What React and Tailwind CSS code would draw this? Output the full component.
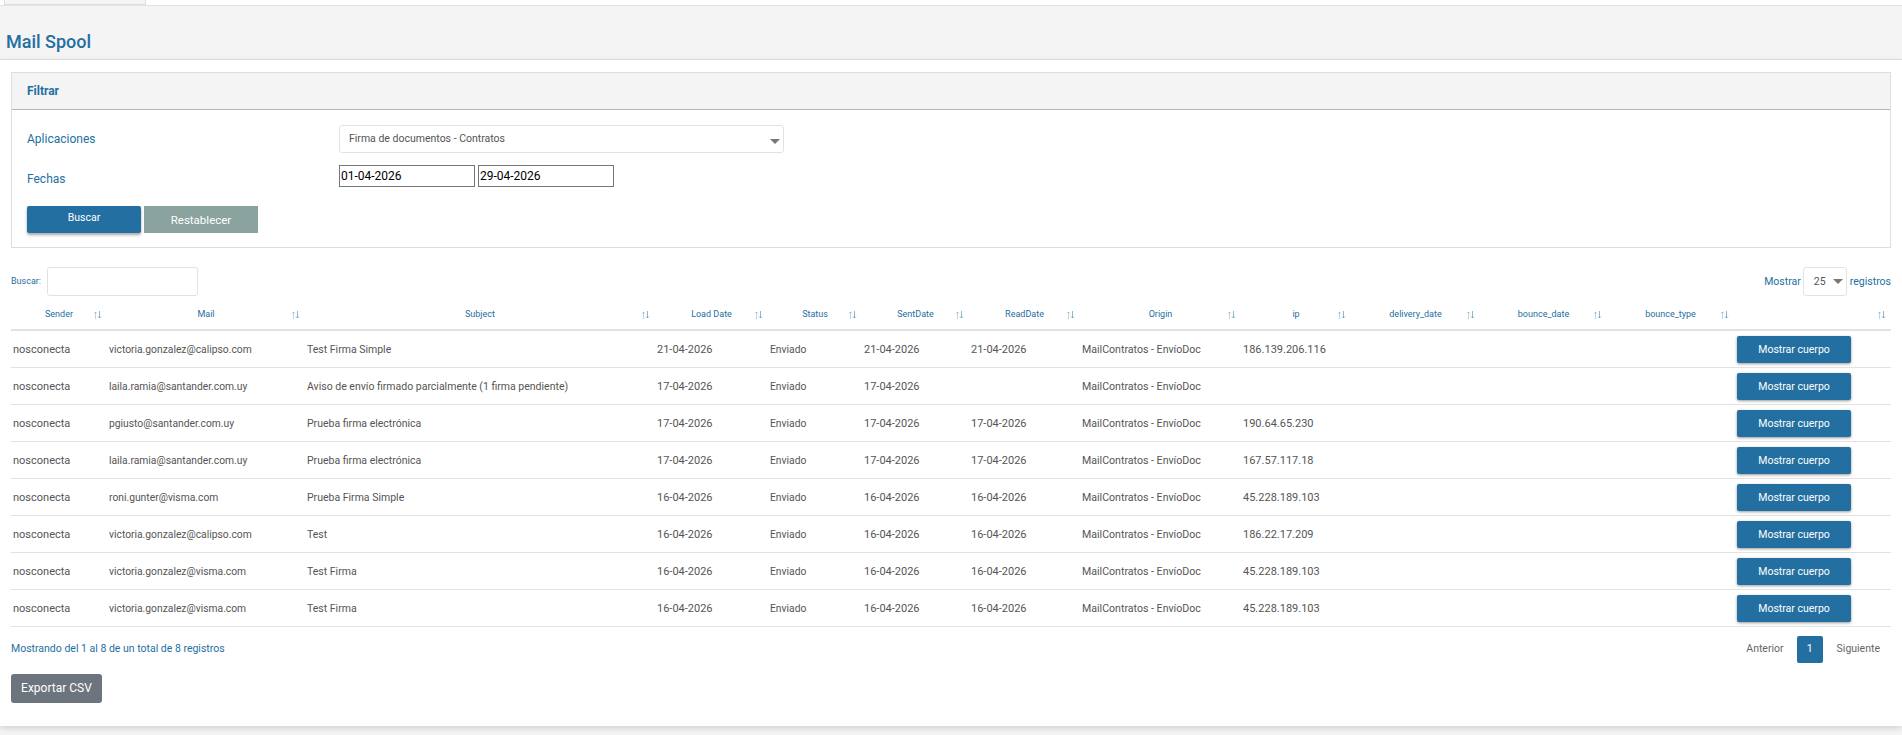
const blue = "text-[#236fa1]";

const columns = [
  { title: "Sender", width: "w-[96px]" },
  { title: "Mail", width: "w-[198px]" },
  { title: "Subject", width: "w-[350px]" },
  { title: "Load Date", width: "w-[113px]" },
  { title: "Status", width: "w-[94px]" },
  { title: "SentDate", width: "w-[107px]" },
  { title: "ReadDate", width: "w-[111px]" },
  { title: "Origin", width: "w-[161px]" },
  { title: "ip", width: "w-[110px]" },
  { title: "delivery_date", width: "w-[129px]" },
  { title: "bounce_date", width: "w-[127px]" },
  { title: "bounce_type", width: "w-[127px]" },
  { title: "", width: "w-[157px]" },
];

const rows = [
  ["victoria.gonzalez@calipso.com", "Test Firma Simple", "21-04-2026", "21-04-2026", "21-04-2026", "186.139.206.116"],
  ["laila.ramia@santander.com.uy", "Aviso de envío firmado parcialmente (1 firma pendiente)", "17-04-2026", "17-04-2026", "", ""],
  ["pgiusto@santander.com.uy", "Prueba firma electrónica", "17-04-2026", "17-04-2026", "17-04-2026", "190.64.65.230"],
  ["laila.ramia@santander.com.uy", "Prueba firma electrónica", "17-04-2026", "17-04-2026", "17-04-2026", "167.57.117.18"],
  ["roni.gunter@visma.com", "Prueba Firma Simple", "16-04-2026", "16-04-2026", "16-04-2026", "45.228.189.103"],
  ["victoria.gonzalez@calipso.com", "Test", "16-04-2026", "16-04-2026", "16-04-2026", "186.22.17.209"],
  ["victoria.gonzalez@visma.com", "Test Firma", "16-04-2026", "16-04-2026", "16-04-2026", "45.228.189.103"],
  ["victoria.gonzalez@visma.com", "Test Firma", "16-04-2026", "16-04-2026", "16-04-2026", "45.228.189.103"],
];

const SortIcon = () => (
  <svg width="9" height="8" viewBox="0 0 9 8" fill="none" stroke="#236fa1" strokeWidth="1" className="absolute right-[5px] top-1/2 -translate-y-1/2">
    <path d="M2.5 8V1M1 2.5L2.5 1L4 2.5" opacity="0.3" />
    <path d="M6.5 0V7M5 5.5L6.5 7L8 5.5" opacity="0.5" />
  </svg>
);

const Caret = ({ className }) => (
  <svg width="10" height="5" viewBox="0 0 10 5" className={`shrink-0 ${className || ""}`}>
    <path d="M0 0H10L5 5Z" fill="#777777" />
  </svg>
);

const App = () => {
  return (
    <div className="w-[1902px] h-[735px] overflow-hidden bg-[#f4f4f4] font-['Roboto',sans-serif]">
      <div className="h-[6px] bg-white border-b border-[#e2e2e2]">
        <div className="ml-[4px] w-[142px] h-[5px] bg-[#f4f4f4] border border-t-0 border-[#dddddd]"></div>
      </div>

      <div className="h-[54px] border-b border-[#e2e2e2] flex items-end pb-[5px] pl-[6px]">
        <h1 className={`text-[18px] leading-[24px] font-medium ${blue}`}>Mail Spool</h1>
      </div>

      <div className="bg-white h-[666px] px-[11px] pt-[12px] shadow-[0_2px_6px_rgba(0,0,0,0.15)]">
        <div className="h-[176px] border border-[#dddddd]">
          <div className={`h-[37px] bg-[#f4f4f4] border-b border-[#b5b5b5] flex items-center pl-[15px] text-[12px] font-bold ${blue}`}>
            Filtrar
          </div>
          <div className="pl-[15px] pt-[15px]">
            <div className="flex items-center h-[28px]">
              <div className={`w-[312px] text-[12px] ${blue}`}>Aplicaciones</div>
              <div className="w-[445px] h-[28px] border border-[#e2e2e2] rounded-[3px] flex items-center justify-between pl-[9px] pr-[3px] text-[10.5px] text-[#555555]">
                <span>Firma de documentos - Contratos</span>
                <Caret className="mt-[4px]" />
              </div>
            </div>
            <div className="flex items-center mt-[12px] h-[22px]">
              <div className={`w-[312px] text-[12px] pt-[5px] ${blue}`}>Fechas</div>
              <div className="flex gap-[3px]">
                <input readOnly value="01-04-2026" className="w-[136px] h-[22px] border border-[#767676] px-[1px] text-[12px] text-black outline-none" />
                <input readOnly value="29-04-2026" className="w-[136px] h-[22px] border border-[#767676] px-[1px] text-[12px] text-black outline-none" />
              </div>
            </div>
            <div className="flex gap-[3px] mt-[19px]">
              <button className="w-[114px] h-[27px] bg-[#236fa1] rounded-[2px] text-white text-[10.5px] pb-[3px] shadow-[0_2px_3px_rgba(0,0,0,0.35)]">Buscar</button>
              <button className="w-[114px] h-[27px] bg-[#8aa39e] text-white text-[11.5px] pt-[3px]">Restablecer</button>
            </div>
          </div>
        </div>

        <div className="flex justify-between items-center mt-[19px] h-[29px]">
          <div className="flex items-center">
            <span className={`text-[9px] w-[36px] ${blue}`}>Buscar:</span>
            <input readOnly className="w-[151px] h-[29px] border border-[#e2e2e2] rounded-[3px] outline-none" />
          </div>
          <div className={`flex items-center text-[10.5px] ${blue}`}>
            <span className="mr-[2px]">Mostrar</span>
            <div className="w-[44px] h-[29px] border border-[#e2e2e2] rounded-[3px] flex items-center justify-between pl-[10px] pr-[3px] text-[#555555]">
              <span>25</span>
              <Caret />
            </div>
            <span className="ml-[3px]">registros</span>
          </div>
        </div>

        <table className="table-fixed border-collapse w-[1880px] mt-[5px] text-[#555555]">
          <colgroup>
            {columns.map((c, i) => <col key={i} className={c.width} />)}
          </colgroup>
          <thead>
            <tr className="h-[29px] border-b-2 border-[#e2e2e2]">
              {columns.map((c, i) => (
                <th key={i} className={`relative font-normal text-[9px] text-center ${blue}`}>
                  {c.title}
                  <SortIcon />
                </th>
              ))}
            </tr>
          </thead>
          <tbody>
            {rows.map((r, i) => (
              <tr key={i} className="h-[37px] border-b border-[#e2e2e2] text-[11px] leading-[16px] [&>td]:pt-[2px]">
                <td className="pl-[2px]">nosconecta</td>
                <td className="pl-[2px] text-[10.3px]">{r[0]}</td>
                <td className="pl-[2px] text-[10.5px]">{r[1]}</td>
                <td className="pl-[2px]">{r[2]}</td>
                <td className="pl-[2px] text-[10.3px]">Enviado</td>
                <td className="pl-[2px]">{r[3]}</td>
                <td className="pl-[2px]">{r[4]}</td>
                <td className="pl-[2px] text-[10.6px]">MailContratos - EnvíoDoc</td>
                <td className="pl-[2px]">{r[5]}</td>
                <td></td>
                <td></td>
                <td></td>
                <td className="pl-[3px]">
                  <button className="block w-[114px] h-[27px] bg-[#236fa1] rounded-[2px] text-white text-[10.5px] shadow-[0_1px_3px_rgba(0,0,0,0.4)]">Mostrar cuerpo</button>
                </td>
              </tr>
            ))}
          </tbody>
        </table>

        <div className="flex justify-between items-center mt-[9px] h-[27px] text-[10.5px]">
          <span className={blue}>Mostrando del 1 al 8 de un total de 8 registros</span>
          <div className="flex items-center text-[#666666] pr-[11px]">
            <span className="mr-[13px]">Anterior</span>
            <span className="w-[26px] h-[27px] bg-[#236fa1] rounded-[2px] text-white flex items-center justify-center">1</span>
            <span className="ml-[14px]">Siguiente</span>
          </div>
        </div>

        <button className="block mt-[11px] w-[91px] h-[29px] bg-[#6c757d] rounded-[3px] text-white text-[12px]">Exportar CSV</button>
      </div>
    </div>
  );
};

export default App;
